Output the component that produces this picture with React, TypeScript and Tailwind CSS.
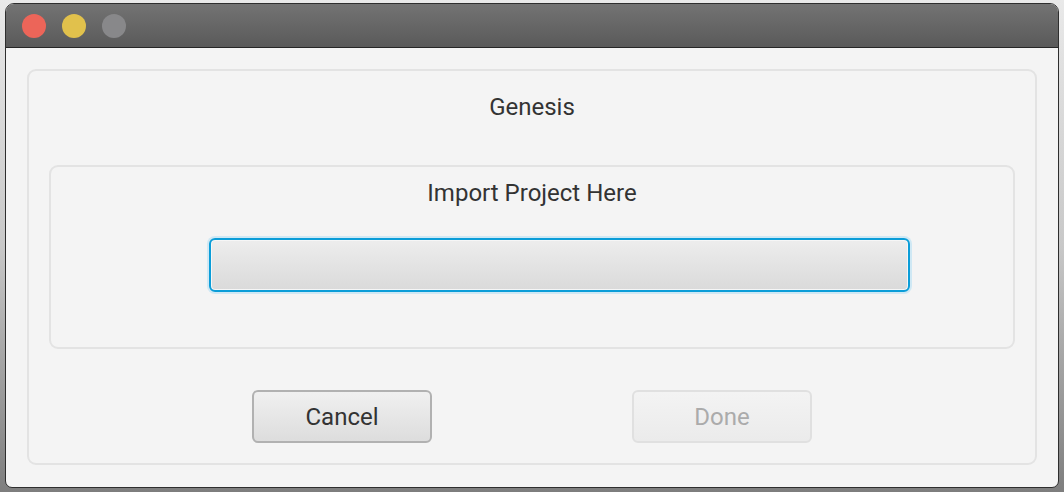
import React from 'react';

const font = { fontFamily: 'Roboto, "Noto Sans", sans-serif' };

export default function App() {
  return (
    <div
      className="w-[1064px] h-[492px] pl-[5px] pt-[3px] bg-gradient-to-b from-[#e9e9e9] via-[#c8c8c8] to-[#7e7e7e] overflow-hidden"
      style={font}
    >
      <div className="w-[1054px] h-[485px] flex flex-col rounded-t-[9px] rounded-b-[7px] border border-[#2e2e2e] overflow-hidden bg-[#f4f4f4]">
        {/* Title bar */}
        <div className="h-[44px] shrink-0 flex items-center gap-4 pl-[16px] bg-gradient-to-b from-[#737373] to-[#5a5a5a] border-b border-[#262626]">
          <span className="w-[24px] h-[24px] rounded-full bg-[#ec6559]" />
          <span className="w-[24px] h-[24px] rounded-full bg-[#e1c14c]" />
          <span className="w-[24px] h-[24px] rounded-full bg-[#88888a]" />
        </div>

        {/* Body */}
        <div className="flex-1 p-[21px]">
          <div className="h-[396px] rounded-[9px] border-2 border-[#e3e3e3] flex flex-col">
            <div className="h-[30px] mt-[21px] leading-[30px] text-center text-[24px] text-[#333333]">Genesis</div>

            <div className="mx-[20px] mt-[43px] h-[184px] rounded-[9px] border-2 border-[#e3e3e3] flex flex-col">
              <div className="h-[30px] mt-[11px] leading-[30px] text-center text-[24px] text-[#333333]">Import Project Here</div>
              <div className="mt-[30px] ml-[158px] w-[701px] h-[54px] rounded-[6px] border-2 border-[#0b9dd8] ring-2 ring-[#cfe8f4] bg-gradient-to-b from-[#ededed] to-[#dadada] shadow-[inset_0_0_0_1px_#f6f6f6]" />
            </div>

            <div className="mt-[41px] ml-[223px] flex gap-[200px]">
              <button className="w-[180px] h-[53px] rounded-[6px] border-2 border-[#b1b1b1] bg-gradient-to-b from-[#f0f0f0] to-[#dddddd] text-[24px] text-[#333333]">
                Cancel
              </button>
              <button className="w-[180px] h-[53px] rounded-[6px] border-2 border-[#e0e0e0] bg-gradient-to-b from-[#f3f3f3] to-[#ebebeb] text-[24px] text-[#ababab]">
                Done
              </button>
            </div>
          </div>
        </div>
      </div>
    </div>
  );
}
